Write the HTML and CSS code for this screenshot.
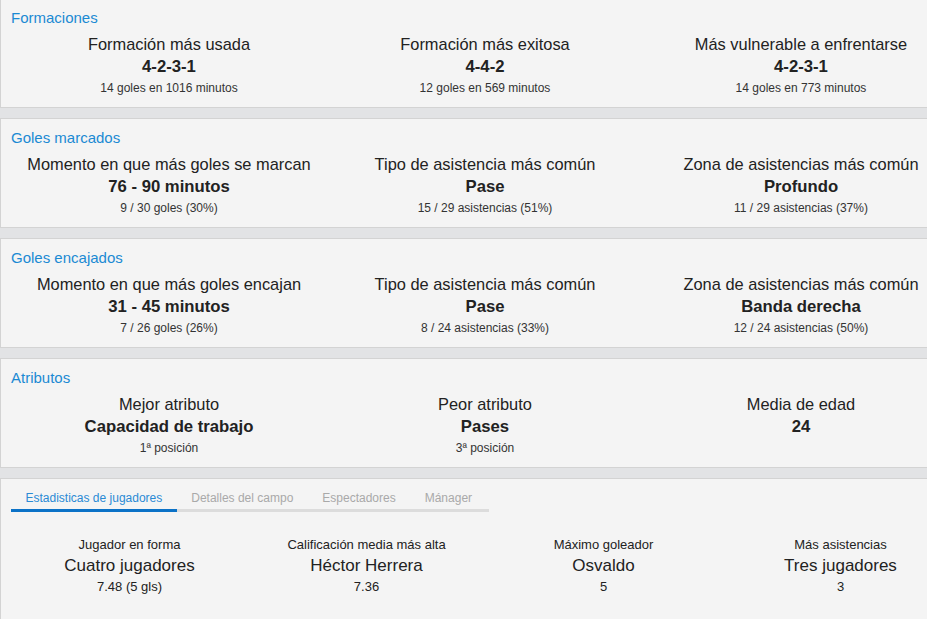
FILE: index.html
```html
<!DOCTYPE html>
<html>
<head>
    <meta charset="utf-8">
    <title>Estadísticas del equipo</title>
    <link rel="stylesheet" href="styles.css">
</head>
<body>
    <div class="page">
        <div class="card">
            <h2 class="card-title">Formaciones</h2>
            <div class="stats">
                <div class="stat">
                    <div class="stat-label">Formación más usada</div>
                    <div class="stat-value">4-2-3-1</div>
                    <div class="stat-sub">14 goles en 1016 minutos</div>
                </div>
                <div class="stat">
                    <div class="stat-label">Formación más exitosa</div>
                    <div class="stat-value">4-4-2</div>
                    <div class="stat-sub">12 goles en 569 minutos</div>
                </div>
                <div class="stat">
                    <div class="stat-label">Más vulnerable a enfrentarse</div>
                    <div class="stat-value">4-2-3-1</div>
                    <div class="stat-sub">14 goles en 773 minutos</div>
                </div>
            </div>
        </div>

        <div class="card">
            <h2 class="card-title">Goles marcados</h2>
            <div class="stats">
                <div class="stat">
                    <div class="stat-label">Momento en que más goles se marcan</div>
                    <div class="stat-value">76 - 90 minutos</div>
                    <div class="stat-sub">9 / 30 goles (30%)</div>
                </div>
                <div class="stat">
                    <div class="stat-label">Tipo de asistencia más común</div>
                    <div class="stat-value">Pase</div>
                    <div class="stat-sub">15 / 29 asistencias (51%)</div>
                </div>
                <div class="stat">
                    <div class="stat-label">Zona de asistencias más común</div>
                    <div class="stat-value">Profundo</div>
                    <div class="stat-sub">11 / 29 asistencias (37%)</div>
                </div>
            </div>
        </div>

        <div class="card">
            <h2 class="card-title">Goles encajados</h2>
            <div class="stats">
                <div class="stat">
                    <div class="stat-label">Momento en que más goles encajan</div>
                    <div class="stat-value">31 - 45 minutos</div>
                    <div class="stat-sub">7 / 26 goles (26%)</div>
                </div>
                <div class="stat">
                    <div class="stat-label">Tipo de asistencia más común</div>
                    <div class="stat-value">Pase</div>
                    <div class="stat-sub">8 / 24 asistencias (33%)</div>
                </div>
                <div class="stat">
                    <div class="stat-label">Zona de asistencias más común</div>
                    <div class="stat-value">Banda derecha</div>
                    <div class="stat-sub">12 / 24 asistencias (50%)</div>
                </div>
            </div>
        </div>

        <div class="card">
            <h2 class="card-title">Atributos</h2>
            <div class="stats">
                <div class="stat">
                    <div class="stat-label">Mejor atributo</div>
                    <div class="stat-value">Capacidad de trabajo</div>
                    <div class="stat-sub">1ª posición</div>
                </div>
                <div class="stat">
                    <div class="stat-label">Peor atributo</div>
                    <div class="stat-value">Pases</div>
                    <div class="stat-sub">3ª posición</div>
                </div>
                <div class="stat">
                    <div class="stat-label">Media de edad</div>
                    <div class="stat-value">24</div>
                </div>
            </div>
        </div>

        <div class="card card-tabs">
            <div class="tabs">
                <div class="tab active">Estadisticas de jugadores</div>
                <div class="tab">Detalles del campo</div>
                <div class="tab">Espectadores</div>
                <div class="tab">Mánager</div>
            </div>
            <div class="players">
                <div class="player">
                    <div class="player-label">Jugador en forma</div>
                    <div class="player-name">Cuatro jugadores</div>
                    <div class="player-value">7.48 (5 gls)</div>
                </div>
                <div class="player">
                    <div class="player-label">Calificación media más alta</div>
                    <div class="player-name">Héctor Herrera</div>
                    <div class="player-value">7.36</div>
                </div>
                <div class="player">
                    <div class="player-label">Máximo goleador</div>
                    <div class="player-name">Osvaldo</div>
                    <div class="player-value">5</div>
                </div>
                <div class="player">
                    <div class="player-label">Más asistencias</div>
                    <div class="player-name">Tres jugadores</div>
                    <div class="player-value">3</div>
                </div>
            </div>
        </div>
    </div>
</body>
</html>
```

FILE: styles.css
```css
body {
    margin: 0;
    background: #e2e3e5;
    font-family: 'Liberation Sans', Arial, sans-serif;
    color: #222;
    overflow: hidden;
}

.page {
    width: 970px;
    margin-top: -2px;
    display: flex;
    flex-direction: column;
    gap: 10px;
}

.card {
    background: #f4f4f4;
    border: 1px solid #d3d3d3;
    padding: 9px 10px 10px;
}

.card-title {
    margin: 0;
    font-size: 15px;
    font-weight: normal;
    line-height: 20px;
    color: #1b8ad3;
}

/* three columns of stats */
.stats {
    display: grid;
    grid-template-columns: repeat(3, 1fr);
    margin-top: 5px;
    text-align: center;
}

.stat-label {
    font-size: 16.4px;
    line-height: 22px;
}

.stat-value {
    font-size: 16.7px;
    font-weight: bold;
    line-height: 24px;
}

.stat-sub {
    font-size: 12px;
    line-height: 18px;
    color: #333;
}

/* tabs block */
.card-tabs {
    padding-bottom: 40px;
}

.tabs {
    display: flex;
    width: 478px;
    border-bottom: 3px solid #dcdcdc;
}

.tab {
    padding: 0 14.5px 1px;
    font-size: 12px;
    line-height: 20px;
    color: #a9a9a9;
    margin-bottom: -3px;
    border-bottom: 3px solid transparent;
}

.tab.active {
    color: #2a8ad4;
    border-bottom-color: #0b72c7;
}

.players {
    display: grid;
    grid-template-columns: repeat(4, 1fr);
    margin-top: 24px;
    text-align: center;
}

.player-label {
    font-size: 13px;
    line-height: 18px;
    color: #222;
}

.player-name {
    font-size: 17px;
    line-height: 24px;
}

.player-value {
    font-size: 13px;
    line-height: 18px;
    color: #222;
}
```
